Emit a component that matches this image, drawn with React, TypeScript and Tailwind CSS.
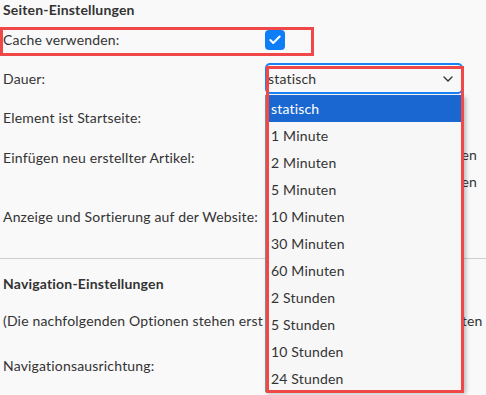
import { Check, ChevronDown } from "lucide-react";

const DURATIONS = [
  "statisch",
  "1 Minute",
  "2 Minuten",
  "5 Minuten",
  "10 Minuten",
  "30 Minuten",
  "60 Minuten",
  "2 Stunden",
  "5 Stunden",
  "10 Stunden",
  "24 Stunden",
];

function Label({ children }: { children: React.ReactNode }) {
  return <div className="w-[265px] shrink-0 pl-[3px]">{children}</div>;
}

export default function App() {
  return (
    <div
      className="relative h-[395px] w-[486px] overflow-hidden bg-[#f9f9f9] text-[14px] leading-5 tracking-[0.18px] text-[#333]"
      style={{ fontFamily: "Lato, 'Noto Sans', sans-serif" }}
    >
      {/* Seiten-Einstellungen */}
      <div className="flex h-[19px] items-center pl-[3px] font-bold">Seiten-Einstellungen</div>

      <div className="mt-[10px] flex h-[22px] items-center">
        <Label>Cache verwenden:</Label>
        <div className="flex h-5 w-5 items-center justify-center rounded-[4px] bg-[#0d7ef8]">
          <Check className="h-[14px] w-[14px] text-white" strokeWidth={3.5} />
        </div>
      </div>

      <div className="mt-[12px] flex h-[31px] items-center">
        <Label>Dauer:</Label>
        <div className="flex h-[31px] w-[198px] items-center justify-between rounded-[5px] border-2 border-[#1a82f7] bg-[#f8f8f8] pl-[1px] pr-[5px]">
          <span>statisch</span>
          <ChevronDown className="h-4 w-4 text-[#333]" strokeWidth={2} />
        </div>
      </div>

      <div className="mt-[14px] flex h-5 items-center">
        <Label>Element ist Startseite:</Label>
      </div>

      <div className="mt-[16px] flex">
        <Label>
          <div className="mt-[3px] flex h-[22px] items-center">Einfügen neu erstellter Artikel:</div>
        </Label>
        <div className="flex flex-1 flex-col gap-[5px] pr-[9px] text-right">
          <div className="flex h-[22px] items-center justify-end">am Anfang der Liste einfügen</div>
          <div className="flex h-[22px] items-center justify-end">am Ende der Liste einfügen</div>
        </div>
      </div>

      <div className="mt-[14px] flex h-5 items-center">
        <Label>Anzeige und Sortierung auf der Website:</Label>
      </div>

      <div className="mt-[31px] border-t border-[#cfcfcf]" />

      <div className="mt-[15px] flex h-5 items-center pl-[3px] font-bold">Navigation-Einstellungen</div>

      <div className="mt-[17px] flex h-5 items-center whitespace-nowrap pl-[3px]">
        (Die nachfolgenden Optionen stehen erst nach dem Speichern allen Inhalten zur Verfügung)
      </div>

      <div className="mt-[25px] flex h-5 items-center">
        <Label>Navigationsausrichtung:</Label>
      </div>

      {/* open dropdown list */}
      <ul className="absolute left-[265px] top-[95px] w-[199px] border-l border-[#8a8a8a] bg-[#f7f7f7] shadow-[2px_2px_4px_rgba(0,0,0,0.25)]">
        {DURATIONS.map((d, i) => (
          <li
            key={d}
            className={`flex h-[27px] items-center pl-[5px] ${i === 0 ? "bg-[#1a67d2] text-white" : ""}`}
          >
            {d}
          </li>
        ))}
      </ul>

      {/* annotation boxes */}
      <div className="absolute left-0 top-[27px] h-[29px] w-[314px] border-[3px] border-[#f04848]" />
      <div className="absolute left-[266px] top-[66px] h-[327px] w-[198px] border-[3px] border-[#f04848]" />
    </div>
  );
}
